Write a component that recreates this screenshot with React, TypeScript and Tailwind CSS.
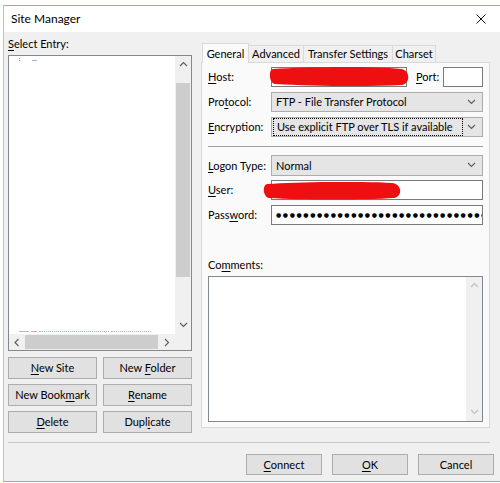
import React from "react";

const U = ({ children }: { children: React.ReactNode }) => (
  <span className="underline decoration-1 underline-offset-[2px]">{children}</span>
);

const Chevron = ({ dir = "down", color = "#606060" }: { dir?: "down" | "up" | "left" | "right"; color?: string }) => {
  const d =
    dir === "down"
      ? "M1 2 L4.5 5.5 L8 2"
      : dir === "up"
      ? "M1 6 L4.5 2.5 L8 6"
      : dir === "left"
      ? "M5.5 1 L2 4.5 L5.5 8"
      : "M3 1 L6.5 4.5 L3 8";
  return (
    <svg width="9" height="9" viewBox="0 0 9 9">
      <path d={d} stroke={color} strokeWidth="1.2" fill="none" />
    </svg>
  );
};

const Btn = ({ children, w }: { children: React.ReactNode; w: string }) => (
  <div className={`${w} h-[22px] bg-[#e1e1e1] border border-[#adadad] flex items-center justify-center`}>
    {children}
  </div>
);

const Combo = ({ children, focus = false, h = "h-[20px]" }: { children: React.ReactNode; focus?: boolean; h?: string }) => (
  <div className={`flex-1 ${h} bg-[#e5e5e5] border border-[#adadad] flex items-center pl-[1px] pr-[3px]`}>
    <div
      className={`flex-1 h-full flex items-center pl-[3px] ${
        focus ? "border border-dotted border-black my-[1px] h-[16px]" : ""
      }`}
    >
      {children}
    </div>
    <div className="w-[16px] flex justify-center">
      <Chevron />
    </div>
  </div>
);

const Row = ({ label, children, mt = "mt-[5px]", h = "h-[20px]" }: { label: React.ReactNode; children: React.ReactNode; mt?: string; h?: string }) => (
  <div className={`flex items-center ${h} ${mt}`}>
    <div className="w-[63px] shrink-0">{label}</div>
    {children}
  </div>
);

export default function App() {
  return (
    <div className="w-[500px] h-[483px] bg-white overflow-hidden font-['Lato','Liberation_Sans',sans-serif] text-[11px] leading-[14px] text-black">
      <div className="ml-[3px] mt-[5px] w-[497px] h-[477px] border-t border-b border-l border-t-[#e3a21a] border-b-[#e3a21a] border-l-[#dcc08a] flex flex-col">
        {/* title bar */}
        <div className="h-[26px] bg-white flex items-center justify-between pl-[7px] pr-[14px]">
          <span className="text-[12px]">Site Manager</span>
          <svg width="10" height="10" viewBox="0 0 10 10">
            <path d="M0.5 0.5 L9.5 9.5 M9.5 0.5 L0.5 9.5" stroke="#111" strokeWidth="1" />
          </svg>
        </div>
        {/* body */}
        <div className="flex-1 bg-[#f0f0f0] flex flex-col">
          <div className="flex">
            {/* left column */}
            <div className="ml-[4px] w-[184px] pt-[5px] flex flex-col">
              <div className="h-[14px]">
                <U>S</U>elect Entry:
              </div>
              <div className="mt-[4px] h-[296px] border border-[#828790] bg-white grid grid-cols-[1fr_16px] grid-rows-[1fr_16px]">
                <div className="relative flex flex-col justify-between px-[10px] py-[1px]">
                  <div className="flex items-start gap-[12px]">
                    <div className="flex flex-col gap-[1px] pt-[1px]">
                      <div className="w-[1px] h-[1px] bg-[#888]" />
                      <div className="w-[1px] h-[1px] bg-[#888]" />
                    </div>
                    <div className="mt-[3px] w-[5px] h-[1px] bg-[#9ab8e0]" />
                  </div>
                  <div className="flex gap-[2px] mb-[1px]">
                    <div className="w-[10px] h-[1px] bg-[#bbb]" />
                    <div className="w-[6px] h-[1px] bg-[#9ab8e0]" />
                    <div className="w-[70px] h-[1px] border-t border-dotted border-[#c0a0b0]" />
                    <div className="w-[40px] h-[1px] border-t border-dotted border-[#a8a8c0]" />
                  </div>
                </div>
                <div className="bg-[#f0f0f0] flex flex-col">
                  <div className="h-[17px] flex items-center justify-center">
                    <Chevron dir="up" />
                  </div>
                  <div className="h-[10px]" />
                  <div className="h-[194px] mx-[1px] bg-[#cdcdcd]" />
                  <div className="flex-1" />
                  <div className="h-[17px] flex items-center justify-center">
                    <Chevron dir="down" />
                  </div>
                </div>
                <div className="bg-[#f0f0f0] flex items-center">
                  <div className="w-[16px] flex justify-center">
                    <Chevron dir="left" />
                  </div>
                  <div className="w-[133px] h-[14px] bg-[#cdcdcd]" />
                  <div className="flex-1 flex justify-center">
                    <Chevron dir="right" />
                  </div>
                </div>
                <div className="bg-[#f0f0f0]" />
              </div>
              <div className="mt-[6px] grid grid-cols-2 gap-x-[6px] gap-y-[5px]">
                <Btn w="w-full"><span><U>N</U>ew Site</span></Btn>
                <Btn w="w-full"><span>New <U>F</U>older</span></Btn>
                <Btn w="w-full"><span>New Book<U>m</U>ark</span></Btn>
                <Btn w="w-full"><span><U>R</U>ename</span></Btn>
                <Btn w="w-full"><span><U>D</U>elete</span></Btn>
                <Btn w="w-full"><span>Dupl<U>i</U>cate</span></Btn>
              </div>
            </div>
            {/* right column */}
            <div className="ml-[9px] w-[289px] pt-[11px] flex flex-col">
              <div className="h-[19px] flex items-end pl-[1px]">
                <div className="relative z-10 w-[47px] h-[20px] -mb-[1px] bg-[#fafafa] border border-b-0 border-[#d9d9d9] flex items-center justify-center">
                  General
                </div>
                <div className="w-[55px] h-[17px] bg-[#f0f0f0] border-t border-r border-[#d9d9d9] flex items-center justify-center">
                  Advanced
                </div>
                <div className="w-[89px] h-[17px] bg-[#f0f0f0] border-t border-r border-[#d9d9d9] flex items-center justify-center">
                  Transfer Settings
                </div>
                <div className="w-[43px] h-[17px] bg-[#f0f0f0] border-t border-r border-[#d9d9d9] flex items-center justify-center">
                  Charset
                </div>
              </div>
              <div className="h-[366px] bg-[#fafafa] border border-[#d9d9d9] pt-[4px] px-[6px] flex flex-col">
                <Row label={<span><U>H</U>ost:</span>} mt="mt-0">
                  <div className="relative w-[136px] h-[20px] bg-white border border-[#7a7a7a]">
                    <svg className="absolute -left-[2px] -top-[1px]" width="140" height="20" viewBox="0 0 140 20">
                      <path
                        d="M3 2 C 35 0, 100 -1, 131 2 C 140 3, 141 16, 132 18 C 95 20, 40 19, 5 17 C -1 16, -2 3, 3 2 Z"
                        fill="#ee1010"
                      />
                    </svg>
                  </div>
                  <div className="ml-[9px] w-[27px]">
                    <U>P</U>ort:
                  </div>
                  <div className="w-[40px] h-[20px] bg-white border border-[#7a7a7a]" />
                </Row>
                <Row label={<span>Pro<U>t</U>ocol:</span>}>
                  <Combo>FTP - File Transfer Protocol</Combo>
                </Row>
                <Row label={<span><U>E</U>ncryption:</span>}>
                  <Combo focus>Use explicit FTP over TLS if available</Combo>
                </Row>
                <div className="mt-[9px] h-[1px] bg-[#a0a0a0]" />
                <Row label={<span><U>L</U>ogon Type:</span>} mt="mt-[8px]" h="h-[21px]">
                  <Combo h="h-[21px]">Normal</Combo>
                </Row>
                <Row label={<span><U>U</U>ser:</span>} mt="mt-[4px]">
                  <div className="relative flex-1 h-[20px] bg-white border border-[#7a7a7a]">
                    <svg className="absolute -left-[9px] top-[1px]" width="140" height="18" viewBox="0 0 140 18">
                      <path
                        d="M4 2 C 35 0, 100 -1, 129 1 C 139 2, 140 14, 131 16 C 100 18, 40 18, 6 16 C 0 15, -1 3, 4 2 Z"
                        fill="#ee1010"
                      />
                    </svg>
                  </div>
                </Row>
                <Row label={<span>Pass<U>w</U>ord:</span>}>
                  <div className="flex-1 h-[20px] bg-white border border-[#7a7a7a] overflow-hidden flex items-center pl-[4px]">
                    <span className="whitespace-nowrap font-['DejaVu_Sans',sans-serif] text-[6px] tracking-[1.6px] leading-none">
                      {"●".repeat(39)}
                    </span>
                  </div>
                </Row>
                <div className="mt-[33px] h-[14px]">
                  Co<U>m</U>ments:
                </div>
                <div className="mt-[4px] h-[146px] bg-white border border-[#828790] flex justify-end">
                  <div className="w-[16px] bg-[#f0f0f0] flex flex-col justify-between">
                    <div className="h-[17px] flex items-center justify-center">
                      <Chevron dir="up" color="#c0c0c0" />
                    </div>
                    <div className="h-[17px] flex items-center justify-center">
                      <Chevron dir="down" color="#c0c0c0" />
                    </div>
                  </div>
                </div>
              </div>
            </div>
          </div>
          <div className="mt-[9px] ml-[4px] mr-[10px] h-[1px] bg-[#c8c8c8]" />
          <div className="mt-[11px] flex justify-end gap-[10px] pr-[6px]">
            <div className="w-[76px] h-[21px] bg-[#e1e1e1] border border-[#adadad] flex items-center justify-center">
              <span><U>C</U>onnect</span>
            </div>
            <div className="w-[76px] h-[21px] bg-[#e1e1e1] border border-[#adadad] flex items-center justify-center">
              <span><U>O</U>K</span>
            </div>
            <div className="w-[76px] h-[21px] bg-[#e1e1e1] border border-[#adadad] flex items-center justify-center">
              Cancel
            </div>
          </div>
        </div>
      </div>
    </div>
  );
}
